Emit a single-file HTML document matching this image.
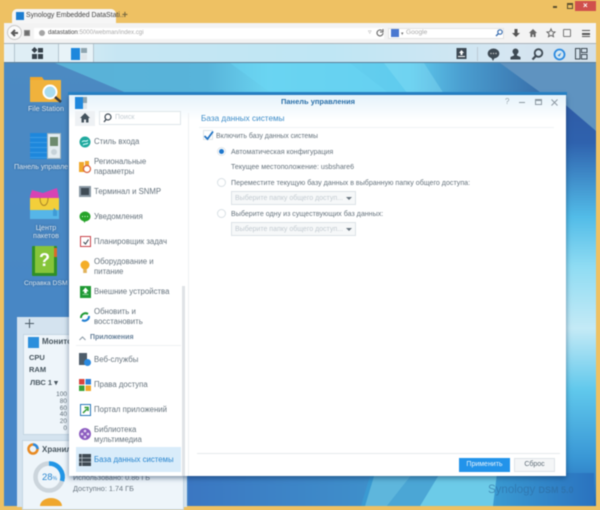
<!DOCTYPE html>
<html><head><meta charset="utf-8"><style>
*{box-sizing:border-box}
html,body{margin:0;padding:0}
body{width:600px;height:510px;overflow:hidden;position:relative;background:#eec163;font-family:"Liberation Sans","Noto Sans CJK SC",sans-serif;font-size:8px;color:#5a6a75}
.a{position:absolute;white-space:nowrap}
.t{position:absolute;white-space:nowrap;line-height:10px}
.it{font-size:7.8px;color:#66737d;left:94px}
.c{font-size:7.1px;color:#66737d}
svg{position:absolute;overflow:visible}
.dl{color:#dbe7f2;font-size:7.2px;text-align:center;text-shadow:0 0 2px #25527f;line-height:8px}
#all{position:absolute;inset:0;filter:blur(.45px)}
</style></head><body><div id="all">
<!-- tab -->
<div class="a" style="left:12px;top:9px;width:104px;height:14px;background:#f6f6f6;border-radius:5px 5px 0 0"></div>
<div class="a" style="left:16px;top:12px;width:8px;height:8px;background:#1f7ed0"></div>
<div class="t" style="left:26px;top:11px;font-size:6.9px;color:#444">Synology Embedded DataStati...</div>
<div class="t" style="left:122px;top:11px;font-size:10px;font-weight:bold;color:#7a6a40">+</div>
<div class="a" style="left:553px;top:6px;width:4px;height:2px;background:#5c5030"></div>
<div class="a" style="left:567px;top:3px;width:6px;height:6px;border:1px solid #5c5030;border-top-width:2px"></div>
<div class="a" style="left:575px;top:1px;width:21px;height:10px;background:#d0504c"></div>
<div class="t" style="left:583px;top:1px;font-size:8px;font-weight:bold;color:#fff">×</div>
<!-- nav bar -->
<div class="a" style="left:4px;top:23px;width:592px;height:21px;background:#f3f3f3;border-bottom:1px solid #a9b3ba"></div>
<div class="a" style="left:34px;top:28px;width:350px;height:11px;background:#fff"></div>
<div class="a" style="left:7px;top:25px;width:15px;height:15px;border-radius:50%;background:#fbfbfb;border:1px solid #c8c8c8"></div>
<svg style="left:10px;top:29px" width="9" height="8"><path d="M8 4H2M5 1L2 4l3 3" fill="none" stroke="#5c5c5c" stroke-width="2"/></svg>
<div class="a" style="left:24px;top:30px;width:6px;height:6px;background:#6d6d6d;border:1px solid #8a8a8a"></div>
<div class="a" style="left:39px;top:30px;width:6px;height:6px;border-radius:50%;background:#a5a5a5"></div>
<div class="t" style="left:48px;top:28px;font-size:6.1px;color:#aaa"><span style="color:#444">datastation</span>:5000/webman/index.cgi</div>
<div class="t" style="left:368px;top:28px;font-size:7px;color:#aaa">▿</div>
<svg style="left:376px;top:29px" width="8" height="8"><path d="M7 4a3 3 0 1 1-1-2.3M7 0v3H4" fill="none" stroke="#666" stroke-width="1.1"/></svg>
<div class="a" style="left:388px;top:28px;width:116px;height:11px;background:#fff;border:1px solid #e2e2e2"></div>
<div class="a" style="left:391px;top:29px;width:8px;height:8px;background:#4a78d0"></div>
<div class="t" style="left:401px;top:29px;font-size:5px;color:#777">▾</div>
<div class="t" style="left:406px;top:28px;font-size:6.6px;color:#aaa">Google</div>
<svg style="left:495px;top:29px" width="8" height="8"><circle cx="5" cy="3" r="2.2" fill="none" stroke="#3b6fb0" stroke-width="1.2"/><path d="M3.4 4.6L1 7" stroke="#3b6fb0" stroke-width="1.4"/></svg>
<svg style="left:511px;top:28px" width="10" height="10"><path d="M3.500 1h3v4h2.500L5 9 1 5h2.500z" fill="#555"/></svg>
<svg style="left:528px;top:28px" width="10" height="10"><path d="M5 1L1 5h1.400v4h2V6.500h1.200V9h2V5H9z" fill="#666"/></svg>
<svg style="left:546px;top:28px" width="10" height="10"><path d="M5 1l1.200 2.700 2.800.3-2.100 1.900.6 2.800L5 7.300 2.500 8.700l.6-2.800L1 4l2.800-.3z" fill="none" stroke="#666" stroke-width="1"/></svg>
<div class="a" style="left:563px;top:29px;width:8px;height:8px;border:1.500px solid #777;border-radius:1px"></div>
<div class="a" style="left:582px;top:30px;width:8px;height:7px;border-top:1.500px solid #555;border-bottom:1.500px solid #555"></div>
<div class="a" style="left:582px;top:33px;width:8px;height:1.500px;background:#555"></div>
<!-- DSM top bar -->
<div class="a" style="left:4px;top:44px;width:592px;height:19px;background:linear-gradient(90deg,#e5f1f7 0,#c6e6f3 20%,#bfe6f4 55%,#d5e6f2 85%,#d3e0ea 100%);border-bottom:1px solid #5d7f99"></div>
<div class="a" style="left:14px;top:44px;width:45px;height:18px;border-left:1px solid #b4c5cf;border-right:1px solid #b4c5cf;background:#dfeef5"></div>
<div class="a" style="left:59px;top:44px;width:35px;height:18px;border-right:1px solid #b4c5cf;background:#e8f3f8"></div>
<svg style="left:30px;top:47px" width="14" height="13"><path d="M4.500 0L7.500 3 4.500 6 1.500 3z" fill="#36414a"/><rect x="8" y="1" width="5" height="4.500" fill="#36414a"/><rect x="2" y="7" width="5" height="5" fill="#36414a"/><rect x="8" y="7" width="5" height="5" fill="#36414a"/></svg>
<div class="a" style="left:71px;top:48px;width:9px;height:12px;background:#1e87dc"></div>
<div class="a" style="left:81px;top:48px;width:6px;height:5px;background:#8fa5af"></div>
<div class="a" style="left:81px;top:54px;width:6px;height:6px;background:#dfe6ea"></div>
<svg style="left:456px;top:48px" width="12" height="12"><rect x="0.500" width="10" height="11" fill="#3e4a54"/><path d="M5.500 2L3 5h1.500v2h2V5H8z" fill="#fff"/><rect x="2" y="8" width="7" height="1" fill="#fff"/></svg>
<div class="a" style="left:477px;top:47px;width:1px;height:14px;background:#bccbd4"></div>
<svg style="left:487px;top:48px" width="13" height="13"><ellipse cx="6.500" cy="5.500" rx="5.800" ry="5" fill="#3e4a54"/><path d="M4 9l2 4 2-4z" fill="#3e4a54"/><circle cx="4" cy="5.500" r=".7" fill="#ccc"/><circle cx="6.500" cy="5.500" r=".7" fill="#ccc"/><circle cx="9" cy="5.500" r=".7" fill="#ccc"/></svg>
<svg style="left:509px;top:48px" width="13" height="12"><circle cx="6.500" cy="3.500" r="3" fill="#3e4a54"/><path d="M5 5h3v2.500l3.500 1.500v2.500h-10V9L5 7.500z" fill="#3e4a54"/></svg>
<svg style="left:531px;top:48px" width="13" height="13"><circle cx="7.500" cy="5" r="3.800" fill="none" stroke="#3e4a54" stroke-width="1.800"/><path d="M4.800 8L1.500 11.500" stroke="#3e4a54" stroke-width="2.200"/></svg>
<svg style="left:553px;top:48px" width="13" height="13"><circle cx="6.500" cy="6.500" r="5" fill="#d5e8f3" stroke="#2b8ae0" stroke-width="1.800"/><path d="M4.500 7.500l4-3-2 4z" fill="#2b8ae0"/></svg>
<svg style="left:575px;top:48px" width="13" height="12"><rect x=".5" y=".5" width="4.500" height="10.500" fill="none" stroke="#3e4a54"/><rect x="6.500" y=".5" width="5.500" height="4" fill="none" stroke="#3e4a54"/><rect x="6.500" y="6.500" width="5.500" height="4.500" fill="none" stroke="#3e4a54"/></svg>
<!-- desktop -->
<div class="a" style="left:4px;top:63px;width:592px;height:443px;overflow:hidden;background:#4a88c2">
<svg style="left:0;top:0" width="592" height="443">
<defs>
<linearGradient id="gt" gradientUnits="userSpaceOnUse" x1="50" y1="0" x2="560" y2="0"><stop offset="0" stop-color="#5ab2d8"/><stop offset=".3" stop-color="#58b4da"/><stop offset=".42" stop-color="#6ad3f0"/><stop offset=".7" stop-color="#5fcbee"/><stop offset=".8" stop-color="#4a9ed0"/><stop offset="1" stop-color="#33619f"/></linearGradient>
<linearGradient id="gr" gradientUnits="userSpaceOnUse" x1="0" y1="30" x2="0" y2="443"><stop offset="0" stop-color="#2f5aa4"/><stop offset=".12" stop-color="#2f62ae"/><stop offset=".3" stop-color="#52bce8"/><stop offset=".42" stop-color="#8fdcf3"/><stop offset=".57" stop-color="#c4eaf6"/><stop offset=".72" stop-color="#60c8ec"/><stop offset=".88" stop-color="#3a98d6"/><stop offset="1" stop-color="#2468b6"/></linearGradient>
<linearGradient id="gb" gradientUnits="userSpaceOnUse" x1="184" y1="0" x2="370" y2="0"><stop offset="0" stop-color="#3b77c2"/><stop offset="1" stop-color="#3f90cb"/></linearGradient>
<linearGradient id="gb2" gradientUnits="userSpaceOnUse" x1="490" y1="0" x2="592" y2="0"><stop offset="0" stop-color="#3a9ad2"/><stop offset="1" stop-color="#2a72bf"/></linearGradient>
<linearGradient id="gl" x1="0" y1="0" x2="0" y2="1"><stop offset="0" stop-color="#4c8ac2"/><stop offset="1" stop-color="#4585c8"/></linearGradient>
</defs>
<rect width="592" height="443" fill="url(#gl)"/>
<path d="M51 0L125 31H592V0z" fill="url(#gt)"/>
<path d="M226 0h120l40 31H268z" fill="#6ad6f3" opacity=".5"/>
<path d="M380 0h40l20 31h-36z" fill="#8fe2f6" opacity=".35"/>
<rect x="560" y="30" width="32" height="413" fill="url(#gr)"/>
<path d="M496 0H592V68L550 32H540z" fill="#5f93c0"/>
<rect x="184" y="410" width="190" height="33" fill="url(#gb)"/>
<path d="M367 410H590V443H357z" fill="url(#gb2)"/>
<path d="M371 410H409L383 443H361z" fill="#5eb6dc"/>
<path d="M409 410H436L416 443H383z" fill="#4ba6d5"/>
<path d="M436 410H493L489 443H416z" fill="#6ccbe8"/>
</svg></div>
<!-- desktop icons -->
<svg style="left:29px;top:74px" width="34" height="30"><path d="M1 3h12l2 3h17v22H1z" fill="#efa72e"/><rect x="1" y="6" width="31" height="22" fill="#f0b23c"/><circle cx="21" cy="18" r="6.500" fill="#a9dcef" stroke="#fff" stroke-width="2"/><path d="M26 23l6 5" stroke="#3b3b3b" stroke-width="2.500"/></svg>
<div class="t dl" style="left:18px;top:105px;width:56px">File Station</div>
<div class="a" style="left:30px;top:133px;width:17px;height:26px;background:repeating-linear-gradient(#1e87dc 0 4px,#3d9be4 4px 5px)"></div>
<div class="a" style="left:47px;top:133px;width:14px;height:26px;background:#e4edf1;border:1px solid #9eb1bb"></div>
<div class="a" style="left:50px;top:137px;width:8px;height:9px;background:#6d8a6d"></div>
<div class="a" style="left:51px;top:149px;width:6px;height:6px;border-radius:50%;background:#c7d3d9"></div>
<div class="t dl" style="left:14px;top:163px;">Панель управле</div>
<svg style="left:30px;top:188px" width="31" height="31"><rect y="8" width="29" height="23" fill="#4da6e2"/><path d="M0 8l2-6 11 3 14-5 2 10-29 8z" fill="#d743b4"/><path d="M0 10h29v12H0z" fill="#f3cf3a"/><path d="M0 22h29v9H0z" fill="#56b6e8"/><path d="M10 10c0 10 8 10 8 0" fill="none" stroke="#a9852a"/><path d="M24 20l3 3v5h-4v-5z" fill="#3f9bd6"/></svg>
<div class="t dl" style="left:18px;top:224px;width:56px">Центр<br>пакетов</div>
<svg style="left:32px;top:246px" width="26" height="30"><rect width="25" height="30" rx="1" fill="#2f8f27"/><rect x="3" width="19" height="27" fill="#86c53a"/><rect x="22" y="2" width="3" height="9" fill="#d96a2a"/><text x="7" y="20" font-size="18" font-weight="bold" fill="#fff" font-family="Liberation Sans">?</text></svg>
<div class="t dl" style="left:24px;top:280px;font-size:6.800px">Справка DSM</div>
<!-- widget panel -->
<div class="a" style="left:17px;top:317px;width:170px;height:190px;background:#d4e3ef"></div>
<svg style="left:25px;top:319px" width="9" height="9"><path d="M4.500 0v9M0 4.500h9" stroke="#4a5a66" stroke-width="1"/></svg>
<div class="a" style="left:23px;top:334px;width:160px;height:101px;background:#eef5fa;border:1px solid #c4d6e3"></div>
<div class="a" style="left:28px;top:337px;width:11px;height:11px;background:#2c8fdc"></div>
<div class="t" style="left:42px;top:337px;font-size:8px;font-weight:bold;color:#48565f">Монитор</div>
<div class="t" style="left:29px;top:353px;font-size:7.500px;font-weight:bold;color:#48565f">CPU</div>
<div class="t" style="left:29px;top:365px;font-size:7.500px;font-weight:bold;color:#48565f">RAM</div>
<div class="t" style="left:30px;top:378px;font-size:7.500px;font-weight:bold;color:#48565f">ЛВС 1 ▾</div>
<div class="a" style="left:55px;top:392px;font-size:6.500px;line-height:6.800px;color:#5d6b76;text-align:right;width:12px;white-space:normal">100 80 60 40 20 0</div>
<div class="a" style="left:22px;top:440px;width:162px;height:70px;background:#eef5fa;border:1px solid #c4d6e3"></div>
<svg style="left:27px;top:443px" width="12" height="12"><circle cx="6" cy="6" r="4.500" fill="none" stroke="#e88a22" stroke-width="2.500"/><path d="M6 1.500a4.500 4.500 0 0 1 4.500 4.500" fill="none" stroke="#2b8ae0" stroke-width="2.500"/></svg>
<div class="t" style="left:42px;top:445px;font-size:8px;font-weight:bold;color:#48565f">Хранилище</div>
<svg style="left:33px;top:461px" width="32" height="32"><circle cx="16" cy="16" r="13.500" fill="none" stroke="#ccd5dc" stroke-width="4.500"/><path d="M16 2.500A13.500 13.500 0 0 1 29 20" fill="none" stroke="#2296e6" stroke-width="4.500"/></svg>
<div class="t" style="left:42px;top:473px;font-size:9.500px;color:#2a86cf">28<span style="font-size:5px">%</span></div>
<div class="t" style="left:73px;top:473px;font-size:7.300px;color:#6a7680">Использовано: 0.86 ГБ</div>
<div class="t" style="left:73px;top:484px;font-size:7.300px;color:#6a7680">Доступно: 1.74 ГБ</div>
<svg style="left:40px;top:500px" width="22" height="6"><path d="M0 6a11 8 0 0 1 22 0z" fill="#efa72e"/></svg>
<!-- watermark -->
<div class="t" style="left:488px;top:485px;font-size:11.500px;color:#2d6ca0;opacity:.6">Synology <span style="font-size:9px;font-weight:bold">DSM 5.0</span></div>
<!-- window -->
<div class="a" style="left:68px;top:92px;width:499px;height:3px;background:#2784c8"></div>
<div class="a" style="left:69px;top:95px;width:497px;height:381px;background:#fff;box-shadow:0 2px 5px rgba(10,40,80,.5)"></div>
<div class="a" style="left:69px;top:95px;width:497px;height:25px;background:linear-gradient(#e6f3fb,#fff)"></div>
<div class="a" style="left:75px;top:97px;width:8px;height:12px;background:#1e87dc"></div>
<div class="a" style="left:83px;top:97px;width:4px;height:6px;background:#8fa5af"></div>
<div class="a" style="left:83px;top:103px;width:4px;height:6px;background:#dfe6ea"></div>
<div class="t" style="left:281px;top:97px;font-size:7.500px;font-weight:bold;color:#2a6fa8">Панель управления</div>
<div class="t" style="left:505px;top:97px;font-size:8px;color:#9aa6ae">?</div>
<div class="a" style="left:519px;top:102px;width:6px;height:1px;background:#8d99a2"></div>
<div class="a" style="left:535px;top:99px;width:7px;height:6px;border:1px solid #8d99a2;border-top-width:2px"></div>
<svg style="left:551px;top:99px" width="7" height="7"><path d="M.5.5l6 6M6.500.5l-6 6" stroke="#8d99a2"/></svg>
<!-- sidebar -->
<div class="a" style="left:75px;top:111px;width:20px;height:15px;background:#eef1f4"></div>
<svg style="left:80px;top:113px" width="10" height="10"><path d="M5 0L0 5h1.500v4.500h2.500V6.500h2v3h2.500V5H10z" fill="#44525c"/></svg>
<div class="a" style="left:99px;top:111px;width:82px;height:14px;background:#fff;border:1px solid #dfe6ea"></div>
<svg style="left:103px;top:113px" width="9" height="10"><circle cx="5" cy="4" r="3" fill="none" stroke="#3e4a54" stroke-width="1.200"/><path d="M3 6.500L1 9" stroke="#3e4a54" stroke-width="1.400"/></svg>
<div class="t" style="left:115px;top:113px;font-size:7px;color:#c5ced4">Поиск</div>
<div class="a" style="left:188px;top:113px;width:1px;height:363px;background:#eef1f3"></div>
<div class="a" style="left:182px;top:286px;width:3px;height:190px;background:#dfe3e6"></div>
<div class="a" style="left:76px;top:447px;width:105px;height:25px;background:#d9ecfa"></div>
<svg style="left:79px;top:136px" width="12" height="12"><circle cx="6" cy="6" r="5.500" fill="#1fa99e"/><path d="M3 6c2-3 4 1 6-2M4 9c2-2 3 0 5-2" stroke="#dff" fill="none"/></svg>
<div class="t it" style="top:137px">Стиль входа</div>
<svg style="left:79px;top:161px" width="13" height="12"><rect y="1" width="5" height="10" fill="#f0a82c"/><rect x="6" width="4" height="6" fill="#f0a82c"/><circle cx="8" cy="8" r="3.500" fill="#fff" stroke="#d9603c" stroke-width="1.200"/></svg>
<div class="t it" style="top:157px">Региональные</div>
<div class="t it" style="top:167px">параметры</div>
<div class="a" style="left:79px;top:186px;width:12px;height:11px;background:#8a98a4"></div>
<div class="a" style="left:81px;top:188px;width:8px;height:7px;background:#3f4b55"></div>
<div class="t it" style="top:187px">Терминал и SNMP</div>
<svg style="left:79px;top:211px" width="12" height="12"><ellipse cx="6" cy="5.500" rx="5.500" ry="5" fill="#27a32a"/><path d="M4 9l1.500 3L7 9z" fill="#27a32a"/><path d="M3 5.500h6" stroke="#dfd" stroke-dasharray="1 1.500"/></svg>
<div class="t it" style="top:212px">Уведомления</div>
<div class="a" style="left:80px;top:236px;width:11px;height:11px;border:1.500px solid #c8434a;background:#fff"></div>
<svg style="left:83px;top:239px" width="6" height="6"><path d="M.5 3l2 2 3-4.500" fill="none" stroke="#3e4a54" stroke-width="1.100"/></svg>
<div class="t it" style="top:237px">Планировщик задач</div>
<svg style="left:80px;top:260px" width="10" height="14"><circle cx="5" cy="5" r="4.500" fill="#f4ae28"/><rect x="3.200" y="9" width="3.600" height="4" fill="#e2b35c"/></svg>
<div class="t it" style="top:257px">Оборудование и</div>
<div class="t it" style="top:267px">питание</div>
<div class="a" style="left:80px;top:286px;width:11px;height:12px;background:#1f9a34"></div>
<svg style="left:81px;top:287px" width="9" height="10"><path d="M4.500 1L2 4h1.500v2h2V4H7zM1.500 7.500h6" fill="#fff" stroke="#fff" stroke-width=".6"/></svg>
<div class="t it" style="top:287px">Внешние устройства</div>
<svg style="left:79px;top:311px" width="12" height="12"><path d="M2 7a4.500 4.500 0 0 1 7-4" fill="none" stroke="#1f9a34" stroke-width="2"/><path d="M10 5a4.500 4.500 0 0 1-7 4" fill="none" stroke="#1f7ed0" stroke-width="2"/></svg>
<div class="t it" style="top:307px">Обновить и</div>
<div class="t it" style="top:317px">восстановить</div>
<svg style="left:79px;top:336px" width="7" height="5"><path d="M.5 4L3.500 1l3 3" fill="none" stroke="#8a98a4"/></svg>
<div class="t" style="left:90px;top:333px;font-size:7px;color:#67819a;font-weight:bold">Приложения</div>
<div class="a" style="left:76px;top:345px;width:105px;height:1px;background:#eef1f3"></div>
<div class="a" style="left:79px;top:353px;width:8px;height:12px;background:#4e5d6a"></div>
<div class="a" style="left:84px;top:359px;width:7px;height:7px;border-radius:50%;background:#2b8ae0"></div>
<div class="t it" style="top:355px">Веб-службы</div>
<svg style="left:79px;top:379px" width="12" height="12"><rect width="5.500" height="5.500" fill="#d9453e"/><rect x="6.500" width="5.500" height="5.500" fill="#2e7fd6"/><rect y="6.500" width="5.500" height="5.500" fill="#39a236"/><rect x="6.500" y="6.500" width="5.500" height="5.500" fill="#f0a82c"/></svg>
<div class="t it" style="top:380px">Права доступа</div>
<div class="a" style="left:80px;top:404px;width:11px;height:12px;border:1.500px solid #2878b8;background:#fff"></div>
<svg style="left:82px;top:406px" width="7" height="8"><path d="M1 7l4-4M2.500 1.500H6V5" fill="none" stroke="#2f9a34" stroke-width="1.500"/></svg>
<div class="t it" style="top:405px">Портал приложений</div>
<svg style="left:79px;top:428px" width="12" height="12"><circle cx="6" cy="6" r="6" fill="#8c5cc0"/><circle cx="6" cy="3" r="1.300" fill="#e7dcf2"/><circle cx="6" cy="9" r="1.300" fill="#e7dcf2"/><circle cx="3" cy="6" r="1.300" fill="#e7dcf2"/><circle cx="9" cy="6" r="1.300" fill="#e7dcf2"/></svg>
<div class="t it" style="top:425px">Библиотека</div>
<div class="t it" style="top:435px">мультимедиа</div>
<svg style="left:79px;top:454px" width="12" height="12"><rect width="12" height="12" fill="#3e4a54"/><path d="M0 4h12M0 8h12M3 0v12" stroke="#b9c4cb" stroke-width=".7"/></svg>
<div class="t it" style="top:455px;color:#2a86cf">База данных системы</div>
<!-- content -->
<div class="t" style="left:201px;top:114px;font-size:8.200px;color:#3d8dc9">База данных системы</div>
<div class="a" style="left:199px;top:127px;width:355px;height:1px;background:#f0f3f5"></div>
<div class="a" style="left:203px;top:130px;width:10px;height:10px;background:#fff;border:1px solid #dfe5e9"></div>
<svg style="left:203px;top:131px" width="11" height="10"><path d="M1.500 5l3 3 5.500-7.500" fill="none" stroke="#2274c4" stroke-width="1.800"/></svg>
<div class="t c" style="left:216px;top:132px;font-size:6.900px">Включить базу данных системы</div>
<div class="a" style="left:217px;top:147px;width:9px;height:9px;border-radius:50%;background:#fff;border:1px solid #dfe5e9"></div>
<div class="a" style="left:219px;top:149px;width:5px;height:5px;border-radius:50%;background:#1f77cc"></div>
<div class="t c" style="left:231px;top:147px">Автоматическая конфигурация</div>
<div class="t c" style="left:231px;top:162px">Текущее местоположение: usbshare6</div>
<div class="a" style="left:217px;top:178px;width:9px;height:9px;border-radius:50%;background:#fff;border:1px solid #d9e0e5"></div>
<div class="t c" style="left:231px;top:178px">Переместите текущую базу данных в выбранную папку общего доступа:</div>
<div class="a" style="left:231px;top:191px;width:125px;height:14px;background:#f6f8f9;border:1px solid #dde3e7"></div>
<div class="t" style="left:235px;top:194px;font-size:7px;color:#c3cbd1">Выберите папку общего доступ...</div>
<div class="a" style="left:346px;top:197px;border:3px solid transparent;border-top:3px solid #6a7680;width:0;height:0"></div>
<div class="a" style="left:217px;top:209px;width:9px;height:9px;border-radius:50%;background:#fff;border:1px solid #d9e0e5"></div>
<div class="t c" style="left:231px;top:209px">Выберите одну из существующих баз данных:</div>
<div class="a" style="left:231px;top:222px;width:125px;height:14px;background:#f6f8f9;border:1px solid #dde3e7"></div>
<div class="t" style="left:235px;top:225px;font-size:7px;color:#c3cbd1">Выберите папку общего доступ...</div>
<div class="a" style="left:346px;top:228px;border:3px solid transparent;border-top:3px solid #6a7680;width:0;height:0"></div>
<div class="a" style="left:197px;top:453px;width:363px;height:1px;background:#e6eaed"></div>
<div class="a" style="left:459px;top:458px;width:51px;height:14px;background:#2293ea;color:#e8f4fd;font-size:7px;line-height:14px;text-align:center">Применить</div>
<div class="a" style="left:514px;top:458px;width:41px;height:14px;background:#f4f6f7;border:1px solid #dfe4e8;color:#5d6b76;font-size:7px;line-height:12px;text-align:center">Сброс</div>
</div></body></html>
